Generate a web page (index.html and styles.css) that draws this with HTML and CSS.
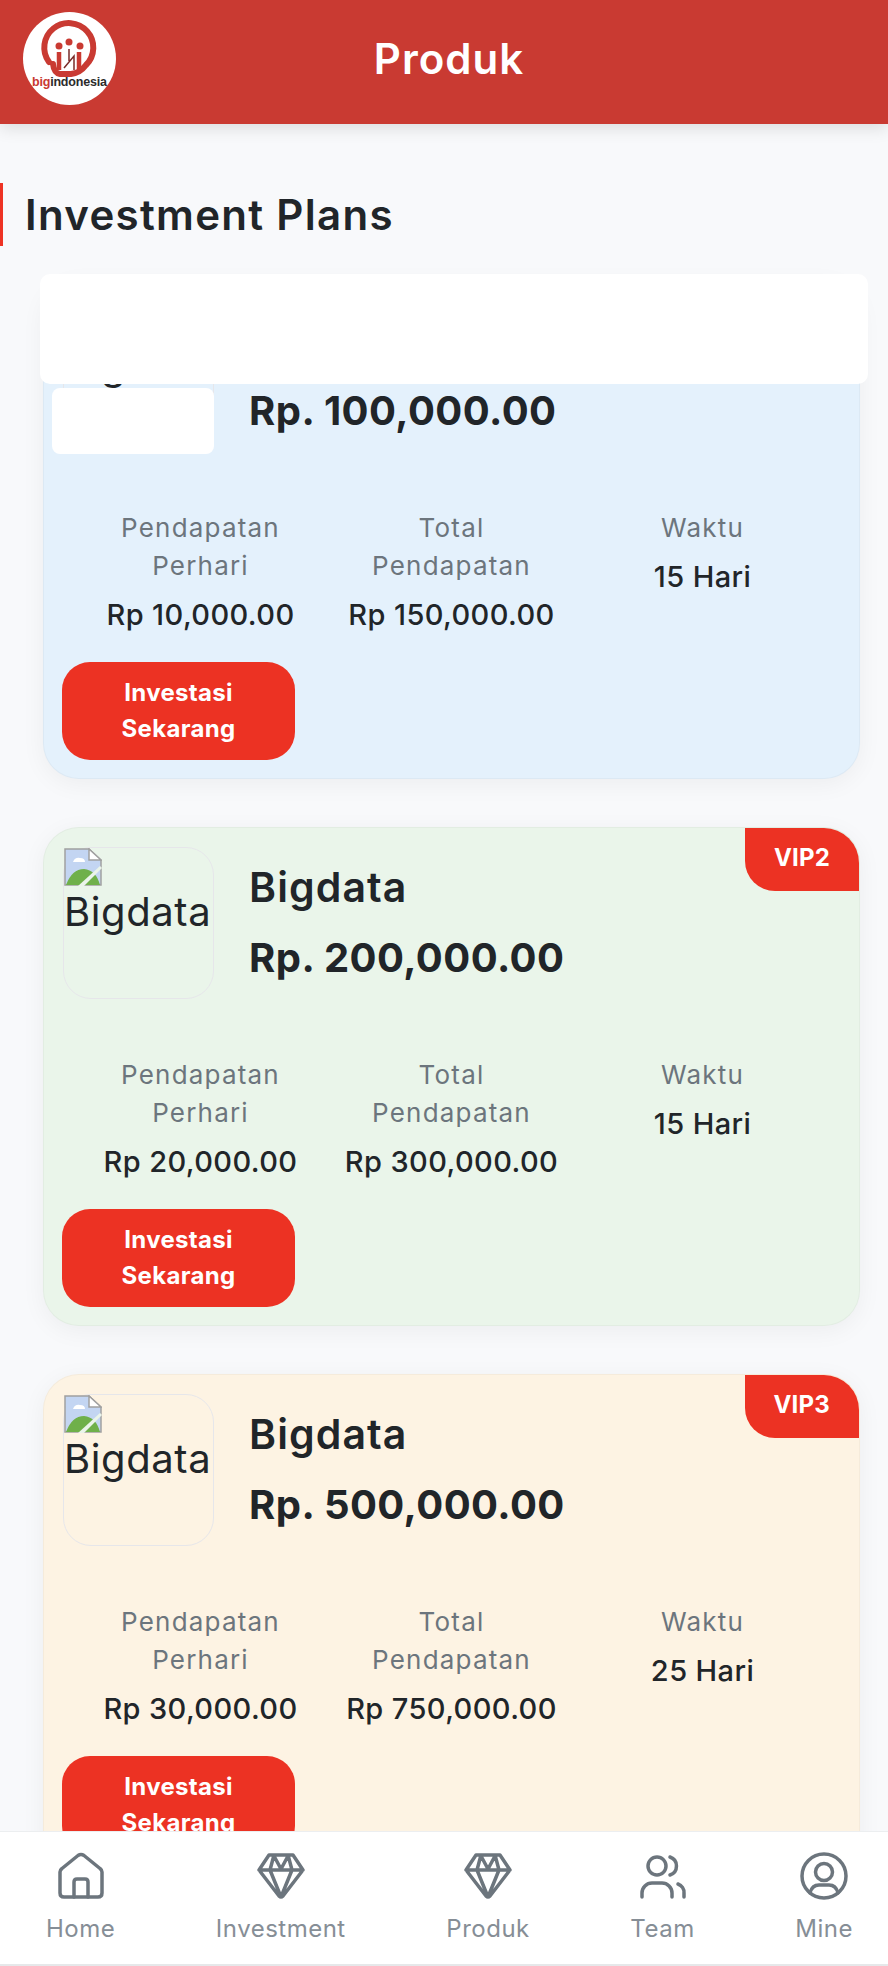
FILE: index.html
```html
<!DOCTYPE html>
<html lang="en">
<head>
    <meta charset="UTF-8">
    <meta name="viewport" content="width=device-width, initial-scale=1.0">
    <title>Produk</title>
    <link rel="stylesheet" href="styles.css">
</head>
<body>
    <!-- header -->
    <header class="top-bar">
        <div class="logo">
            <svg width="93" height="93" viewBox="0 0 93 93">
                <circle cx="46.500" cy="46.500" r="46.500" fill="#fff"/>
                <path d="M26 50 A24.500 24.500 0 1 1 63 53 Q57 61 48 62 H37 Q31 61 30 52" fill="none" stroke="#c93a32" stroke-width="6" stroke-linecap="round"/>
                <circle cx="36" cy="34" r="3.500" fill="#c93a32"/>
                <circle cx="46" cy="30" r="3.500" fill="#c93a32"/>
                <circle cx="57" cy="34" r="3.500" fill="#c93a32"/>
                <path d="M36 40 V58 M56 40 V58" stroke="#c93a32" stroke-width="4.500" fill="none"/>
                <path d="M41 56 L51 44 V58 M46 37 V49" stroke="#7a2b28" stroke-width="1.500" fill="none"/>
                <text x="9" y="74" class="logo-text"><tspan fill="#c93a32">big</tspan><tspan fill="#2b2b2b">indonesia</tspan></text>
            </svg>
        </div>
        <h1 class="top-title">Produk</h1>
    </header>

    <main class="content">
        <h2 class="section-title">Investment Plans</h2>

        <!-- white blocks lying over the first card -->
        <div class="cover cover-wide"></div>
        <div class="cover cover-thumb"></div>

        <div class="plan-list">
            <section class="plan plan-blue">
                <span class="vip">VIP1</span>
                <div class="plan-head">
                    <div class="thumb">
                        <svg class="broken" viewBox="0 0 38 38"><use href="#broken-img"/></svg>
                        <span class="thumb-alt">Bigdata</span>
                    </div>
                    <div class="plan-info">
                        <h3 class="plan-name">Bigdata</h3>
                        <p class="plan-price">Rp. 100,000.00</p>
                    </div>
                </div>
                <div class="stats">
                    <div class="stat"><p class="stat-label">Pendapatan Perhari</p><p class="stat-value">Rp 10,000.00</p></div>
                    <div class="stat"><p class="stat-label">Total Pendapatan</p><p class="stat-value">Rp 150,000.00</p></div>
                    <div class="stat"><p class="stat-label">Waktu</p><p class="stat-value">15 Hari</p></div>
                </div>
                <button class="invest-btn">Investasi Sekarang</button>
            </section>

            <section class="plan plan-green">
                <span class="vip">VIP2</span>
                <div class="plan-head">
                    <div class="thumb">
                        <svg class="broken" viewBox="0 0 38 38"><use href="#broken-img"/></svg>
                        <span class="thumb-alt">Bigdata</span>
                    </div>
                    <div class="plan-info">
                        <h3 class="plan-name">Bigdata</h3>
                        <p class="plan-price">Rp. 200,000.00</p>
                    </div>
                </div>
                <div class="stats">
                    <div class="stat"><p class="stat-label">Pendapatan Perhari</p><p class="stat-value">Rp 20,000.00</p></div>
                    <div class="stat"><p class="stat-label">Total Pendapatan</p><p class="stat-value">Rp 300,000.00</p></div>
                    <div class="stat"><p class="stat-label">Waktu</p><p class="stat-value">15 Hari</p></div>
                </div>
                <button class="invest-btn">Investasi Sekarang</button>
            </section>

            <section class="plan plan-orange">
                <span class="vip">VIP3</span>
                <div class="plan-head">
                    <div class="thumb">
                        <svg class="broken" viewBox="0 0 38 38"><use href="#broken-img"/></svg>
                        <span class="thumb-alt">Bigdata</span>
                    </div>
                    <div class="plan-info">
                        <h3 class="plan-name">Bigdata</h3>
                        <p class="plan-price">Rp. 500,000.00</p>
                    </div>
                </div>
                <div class="stats">
                    <div class="stat"><p class="stat-label">Pendapatan Perhari</p><p class="stat-value">Rp 30,000.00</p></div>
                    <div class="stat"><p class="stat-label">Total Pendapatan</p><p class="stat-value">Rp 750,000.00</p></div>
                    <div class="stat"><p class="stat-label">Waktu</p><p class="stat-value">25 Hari</p></div>
                </div>
                <button class="invest-btn">Investasi Sekarang</button>
            </section>
        </div>
    </main>

    <!-- bottom nav -->
    <nav class="bottom-nav">
        <a class="nav-item">
            <svg class="nav-icon" viewBox="0 0 48 48"><path d="M3 20 Q3 18 5 16.500 L21 3.500 Q24 1.500 27 3.500 L43 16.500 Q45 18 45 20 V41 Q45 45 41 45 H7 Q3 45 3 41 Z"/><path d="M17 45 V30 Q17 27 20 27 H28 Q31 27 31 30 V45"/></svg>
            <span class="nav-label">Home</span>
        </a>
        <a class="nav-item">
            <svg class="nav-icon" viewBox="0 0 48 48"><use href="#diamond"/></svg>
            <span class="nav-label">Investment</span>
        </a>
        <a class="nav-item">
            <svg class="nav-icon" viewBox="0 0 48 48"><use href="#diamond"/></svg>
            <span class="nav-label">Produk</span>
        </a>
        <a class="nav-item">
            <svg class="nav-icon" viewBox="0 0 48 48"><circle cx="18" cy="14" r="9"/><path d="M31 5 A9.500 9.500 0 0 1 31 23"/><path d="M3 45 V41 A10 10 0 0 1 13 31 H23 A10 10 0 0 1 33 41 V45"/><path d="M39 32 A9 9 0 0 1 45 41 V45"/></svg>
            <span class="nav-label">Team</span>
        </a>
        <a class="nav-item">
            <svg class="nav-icon" viewBox="0 0 48 48"><circle cx="24" cy="24" r="22"/><circle cx="24" cy="20" r="8.500"/><path d="M10 41 Q12 33 19 33 H29 Q36 33 38 41"/></svg>
            <span class="nav-label">Mine</span>
        </a>
    </nav>

    <!-- shared icons -->
    <svg class="defs" width="0" height="0">
        <defs>
            <symbol id="diamond" viewBox="0 0 48 48">
                <path d="M12 3 H36 L46 18 L26 44 Q24 46 22 44 L2 18 Z M2 18 H46 M17 3 L13 18 L24 45 L35 18 L31 3 M17 4 L24 17 L31 4"/>
            </symbol>
            <symbol id="broken-img" viewBox="0 0 38 38">
                <path d="M1 1 H25 L37 12 V37 H1 Z" fill="#c3d5f2" stroke="#a0a0a0" stroke-width="1.500"/>
                <path d="M25 1 V12 H37 Z" fill="#fff" stroke="#a0a0a0" stroke-width="1.500"/>
                <path d="M9 14 q2 -5 7 -4 q5 0 5 4 Z" fill="#fff"/>
                <path d="M2 37 Q8 21 20 21 Q32 22 36 37 Z" fill="#6fb04a"/>
                <path d="M36 18 L38 20 L20 38 H14 Z" fill="#eaf4ea"/>
            </symbol>
        </defs>
    </svg>
</body>
</html>
```

FILE: styles.css
```css
* {
    box-sizing: border-box;
}
html, body {
    margin: 0;
    height: 1966px;
    overflow: hidden;
}
body {
    font-family: Inter, "Noto Sans", sans-serif;
    background-color: #f8f9fb;
    color: #212529;
}
h1, h2, h3, p {
    margin: 0;
}

/* header */
.top-bar {
    height: 124px;
    background-color: #c93a32;
    box-shadow: 0 4px 16px rgba(0, 0, 0, 0.12);
    display: flex;
    align-items: center;
    justify-content: center;
    padding: 0 0 0 10px;
    position: relative;
    z-index: 3;
}
.logo {
    position: absolute;
    left: 23px;
    top: 12px;
    width: 93px;
    height: 93px;
}
.logo-text {
    font-family: "Liberation Sans", sans-serif;
    font-size: 12.500px;
    font-weight: 700;
    letter-spacing: -0.2px;
}
.top-title {
    color: #fff;
    font-size: 42px;
    font-weight: 600;
    letter-spacing: 1px;
    line-height: 1;
    margin-bottom: 6px;
}

/* content */
.content {
    position: relative;
    padding-top: 59px;
}
.section-title {
    height: 63px;
    line-height: 63px;
    border-left: 3px solid #ee3324;
    padding-left: 22px;
    font-size: 42px;
    font-weight: 600;
    letter-spacing: 1.300px;
}
.cover {
    position: absolute;
    background-color: #fff;
    z-index: 2;
}
.cover-wide {
    left: 40px;
    top: 150px;
    width: 828px;
    height: 110px;
    border-radius: 10px;
}
.cover-thumb {
    left: 52px;
    top: 264px;
    width: 162px;
    height: 66px;
    border-radius: 8px;
}

.plan-list {
    margin: 34px 28px 0 43px;
    display: flex;
    flex-direction: column;
    gap: 48px;
}
.plan {
    position: relative;
    height: 499px;
    flex-shrink: 0;
    padding: 19px 19px 0;
    border-radius: 36px;
    border: 1px solid rgba(0, 0, 0, 0.03);
    box-shadow: 0 5px 24px rgba(0, 0, 0, 0.05);
    overflow: hidden;
}
.plan-blue {
    background-color: #e4f1fc;
}
.plan-green {
    background-color: #eaf5ea;
}
.plan-orange {
    background-color: #fdf3e3;
}
.vip {
    position: absolute;
    right: 0;
    top: 0;
    height: 63px;
    padding: 0 29px;
    line-height: 60px;
    background-color: #ec3223;
    color: #fff;
    font-size: 24px;
    font-weight: 700;
    letter-spacing: 0.2px;
    border-bottom-left-radius: 30px;
}
.plan-head {
    display: flex;
    gap: 35px;
    height: 152px;
}
.thumb {
    width: 151px;
    height: 152px;
    flex-shrink: 0;
    border: 1px solid #e6e6ea;
    border-radius: 28px;
}
.broken {
    display: block;
    width: 38px;
    height: 38px;
}
.thumb-alt {
    display: block;
    font-size: 40px;
    letter-spacing: 0.6px;
    line-height: 52px;
    white-space: nowrap;
}
.plan-info {
    padding-top: 13px;
}
.plan-name {
    font-size: 41px;
    font-weight: 600;
    letter-spacing: 1.100px;
    line-height: 54px;
}
.plan-price {
    font-size: 40px;
    font-weight: 700;
    letter-spacing: 0.45px;
    line-height: 60px;
    margin-top: 14px;
    white-space: nowrap;
}
.stats {
    display: grid;
    grid-template-columns: repeat(3, 251px);
    justify-content: center;
    margin-top: 57px;
    height: 153px;
    text-align: center;
}
.stat-label {
    color: #6c757d;
    font-size: 26px;
    letter-spacing: 1.200px;
    line-height: 38px;
    padding: 0 20px;
}
.stat-value {
    font-size: 29px;
    font-weight: 500;
    letter-spacing: 0.4px;
    line-height: 46px;
    margin-top: 7px;
    white-space: nowrap;
}
.invest-btn {
    display: block;
    width: 233px;
    height: 98px;
    margin-left: -1px;
    border: none;
    border-radius: 28px;
    background-color: #ec3223;
    color: #fff;
    font-family: inherit;
    font-size: 24px;
    font-weight: 700;
    letter-spacing: 0.3px;
    line-height: 36px;
    padding: 0 30px;
}

/* bottom nav */
.bottom-nav {
    position: fixed;
    left: 0;
    right: 0;
    top: 1831px;
    height: 135px;
    padding: 0 35px 0 46px;
    background-color: #fff;
    border-top: 1px solid #eceef0;
    border-bottom: 2px solid #e6e8ea;
    display: flex;
    justify-content: space-between;
    z-index: 4;
}
.nav-item {
    display: flex;
    flex-direction: column;
    align-items: center;
    padding-top: 20px;
}
.nav-icon {
    display: block;
    width: 48px;
    height: 48px;
    fill: none;
    stroke: #6c757d;
    stroke-width: 3.500;
    stroke-linecap: round;
    stroke-linejoin: round;
}
.nav-label {
    color: #868e96;
    font-size: 24px;
    letter-spacing: 0.5px;
    line-height: 30px;
    margin-top: 14px;
}
.defs {
    position: absolute;
}
```
